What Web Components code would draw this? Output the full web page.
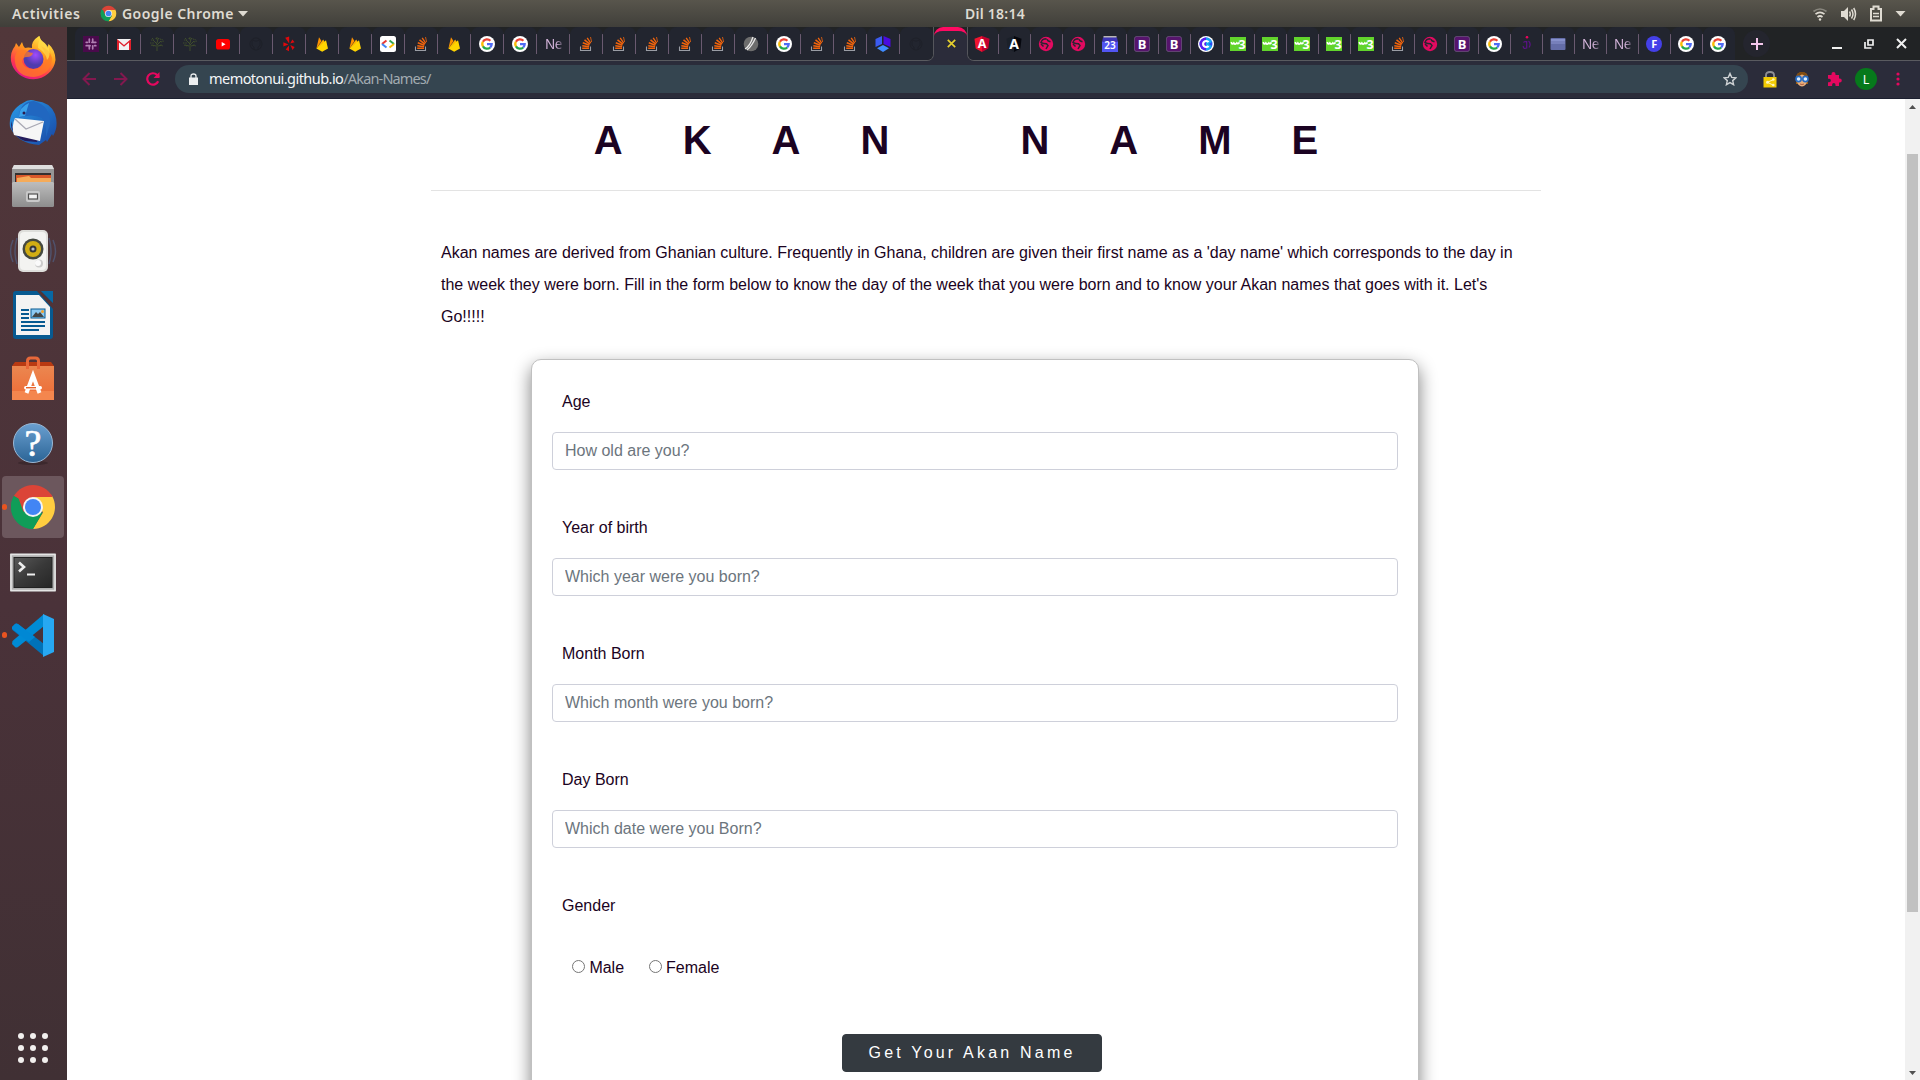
<!DOCTYPE html>
<html lang="en">
<head>
<meta charset="utf-8">
<title>Akan Names</title>
<style>
html,body{margin:0;height:100%;overflow:hidden}
body{font-family:"Liberation Sans",Arial,sans-serif;color:#1b0322}
</style>
</head>
<body>
<desktop-shell>
  <top-panel slot="panel"></top-panel>
  <app-dock slot="dock"></app-dock>
  <browser-window slot="window">
    <tab-strip slot="tabs"></tab-strip>
    <browser-toolbar slot="toolbar"></browser-toolbar>
    <akan-page>
      <form-card>
        <form-field label="Age" hint="How old are you?"></form-field>
        <form-field label="Year of birth" hint="Which year were you born?"></form-field>
        <form-field label="Month Born" hint="Which month were you born?"></form-field>
        <form-field label="Day Born" hint="Which date were you Born?"></form-field>
        <gender-field></gender-field>
        <submit-button>Get Your Akan Name</submit-button>
      </form-card>
    </akan-page>
    <scroll-bar slot="scroll"></scroll-bar>
  </browser-window>
</desktop-shell>

<script>
const UI_FONT = '"Noto Sans","Open Sans",sans-serif';

function define(name, html) {
  const t = document.createElement('template');
  customElements.define(name, class extends HTMLElement {
    constructor() {
      super();
      t.innerHTML = typeof html === 'function' ? html(this) : html;
      this.attachShadow({mode: 'open'}).appendChild(t.content.cloneNode(true));
    }
  });
}

/* ---------- 16px favicons ---------- */
const FAV = {
  slack: '<rect width="16" height="16" fill="#4a0a4c"/><g stroke="#b07fb2" stroke-width="1.700" stroke-linecap="round"><path d="M6.300 3.200v3M9.700 3.200v3M6.300 9.800v3M9.700 9.800v3M3.200 6.300h1.200M11.600 6.300h1.200M3.200 9.700h1.200M11.600 9.700h1.200M8.900 6.300h2M5.100 9.700h2"/></g>',
  gmail: '<path d="M1 3h14v11H1z" fill="#f2f2f2"/><path d="M1 14V3l7 6 7-6v11h-2V6.400L8 10.800 3 6.400V14z" fill="#e0202b"/>',
  tree: '<g stroke="#3f4d2c" fill="none" stroke-width="1"><path d="M8 15V8L4 4M8 9l4-4M8 7l1-4M7 10L3 9M9 10l4-1"/><path d="M2 4h3M3 2l2 2M8 1v3M6.500 2.500h4M11 3l3 1M12 6l3-1M1 7h4M2 9l3 1M11 9l3 1" stroke-dasharray="1.500 .8"/></g>',
  youtube: '<rect x="1" y="3" width="14" height="10.500" rx="2.600" fill="#f00"/><path d="M6.700 6v4.500l3.800-2.200z" fill="#fff"/>',
  github: '<g fill="none" stroke="#1e2028" stroke-width=".9"><circle cx="8" cy="8" r="6"/><path d="M6 14v-3q-3-1-2-5l1-2 2 1h2l2-1 1 2q1 4-2 5v3"/></g>',
  yelp: '<g fill="#e0080c"><path d="M4.200 1.800l4-1.200v6.800z"/><path d="M2.400 6.300l5 2.200-5 2z"/><path d="M8 9.500v5.700l-3.300-1.600z"/><path d="M9.300 9l4.300 2-2 3z"/><path d="M9.200 7.500l2.200-4 2.200 2.700z"/></g>',
  firebase: '<path d="M2.400 12.500L5 1.200 7.500 5z" fill="#ff9100"/><path d="M2.400 12.500L9.200 3.600l1.600 2.700z" fill="#ffb300"/><path d="M2.400 12.500L12 4.300l2 8.200-5.800 3.300z" fill="#ffd400"/>',
  gdev: '<rect width="16" height="16" rx="2.500" fill="#fff"/><g fill="none" stroke-width="2"><path d="M6.500 4.500L2 8" stroke="#ea3a33"/><path d="M2 8l4.500 3.500" stroke="#4285f4"/><path d="M9.500 4.500L14 8" stroke="#32a853"/><path d="M14 8l-4.500 3.500" stroke="#fbbc05"/></g>',
  so: '<path d="M2.500 10.500v4h10v-4" fill="none" stroke="#9a9da5" stroke-width="1.100"/><g stroke="#f2640c" stroke-width="1.500"><path d="M4.200 12.300h6.800"/><path d="M4.300 9.700l6.800 1"/><path d="M4.800 6.800l6.600 2.500"/><path d="M6.500 3.800l5.400 4.400"/><path d="M9.200 1.800l3.500 5.400" stroke-width="1.300"/><path d="M12.500 1l1.100 5" stroke-width=".8"/></g>',
  google: '<circle cx="8" cy="8" r="8" fill="#fff"/><g fill="none" stroke-width="2.300"><path d="M3.900 5.800A4.700 4.700 0 0 1 11.400 4.700" stroke="#ea4335"/><path d="M4.100 10.600A4.700 4.700 0 0 1 3.900 5.700" stroke="#fbbc05"/><path d="M11.200 11.500A4.700 4.700 0 0 1 4 10.400" stroke="#25a84a"/><path d="M8 8.100h4.700A4.700 4.700 0 0 1 11.200 11.500" stroke="#4f6bf5"/></g>',
  shell: '<circle cx="8" cy="8" r="7.300" fill="#6d6d6d"/><path d="M2 13Q7 10 10 1M4 14Q9 10 12.500 2" stroke="#e8e8e8" stroke-width="1.300" fill="none"/>',
  cube: '<path d="M.5 3L7 0v8L.5 11z" fill="#3b5bf0"/><path d="M8.500 0L15.500 3v8l-7-3z" fill="#4a0be0"/><path d="M8 9l6 3.200L8 16l-6-3.800z" fill="#3f8cff"/>',
  angular: '<path d="M8 0l7.500 2.700-1.200 9.800L8 16z" fill="#c3002f"/><path d="M8 0L.5 2.700l1.200 9.800L8 16z" fill="#f0142f"/><text x="8" y="12.300" text-anchor="middle" font-size="12.500" font-weight="700" fill="#fff">A</text>',
  angularDark: '<path d="M8 0l7.500 2.700-1.200 9.800L8 16z" fill="#05070e"/><path d="M8 0L.5 2.700l1.200 9.800L8 16z" fill="#1b2029"/><text x="8" y="12.800" text-anchor="middle" font-size="14" font-weight="700" fill="#fff">A</text>',
  globe: '<circle cx="8" cy="8" r="7.200" fill="#e20a60"/><path d="M8.500 2.800Q4 2.800 3 6.500q2.500 1.300 5.500 1.300l1.500 1.700-2 3.500M9 3.200q.5 1.800 3.500 2.600M3 8l2.500 2.500" stroke="#282530" stroke-width="1.500" fill="none"/>',
  calendar: '<path d="M1.500 0h13v3h-13z" fill="#b9b6b4"/><path d="M0 5h16v11H0z" fill="#5255f2"/><path d="M1 1.500h14L16 6H0z" fill="#3e35b5"/><text x="8" y="12.800" text-anchor="middle" font-size="10" font-weight="600" fill="#fff">23</text>',
  bootstrap: '<rect x=".4" y=".4" width="15.200" height="15.200" rx="2.500" fill="#56146c" stroke="#6e5480" stroke-width=".8"/><text x="8.200" y="12.500" text-anchor="middle" font-size="13" font-weight="700" fill="#fff">B</text>',
  coder: '<circle cx="8" cy="8" r="8" fill="#fff"/><circle cx="8" cy="8" r="6.500" fill="#2a4cf0"/><path d="M8 1.500a6.500 6.500 0 0 0 0 13" fill="#5a1ff0"/><path d="M8 1.500a6.500 6.500 0 0 1 6 4.500L10.500 8l3.500 2A6.500 6.500 0 0 1 8 14.500z" fill="#18a7f4"/><path d="M10.500 6.200a3 3 0 1 0 0 3.600" stroke="#fff" stroke-width="2.200" fill="none"/>',
  w3: '<rect y="1" width="16" height="14" fill="#62d42c"/><path d="M1.300 6q.6 3.200 2.500 1 1.300 2.200 3 0 1 1.500 2.700-.6" fill="none" stroke="#fff" stroke-width="1.700"/><text x="12.200" y="12.700" text-anchor="middle" font-size="12.500" font-weight="700" fill="#fff">3</text>',
  idot: '<circle cx="9" cy="1.200" r="1.300" fill="#e8055c"/><path d="M8.700 5v7.500M5.500 6.500q2-2 3 0M5.200 10q0 3.500 3.500 2M10.500 5q3 2.500 .5 6.500" fill="none" stroke="#5b1287" stroke-width="1.200"/>',
  folder: '<rect x=".5" y="2" width="15" height="12" rx="1" fill="#646da8"/><path d="M1 5h14V3H1z" fill="#8791cc"/><path d="M1 5h14v3H1z" fill="#7780bb"/>',
  fblue: '<circle cx="8" cy="8" r="8" fill="#4440e8"/><text x="8.300" y="11.900" text-anchor="middle" font-size="11" font-weight="700" fill="#fff">F</text>'
};
const fav = n => `<svg width="16" height="16" viewBox="0 0 16 16">${FAV[n]}</svg>`;

/* ---------- browser logo, shared by panel and dock ---------- */
const chromeLogo = s => `<svg width="${s}" height="${s}" viewBox="0 0 48 48">
<path d="M24 24L4.950 13A22 22 0 0 1 43.050 13z" fill="#db4437"/>
<path d="M24 24L4.950 13A22 22 0 0 0 24 46L33 30z" fill="#0f9d58"/>
<path d="M24 13H43.050A22 22 0 0 1 24 46L34 29.500z" fill="#ffcd40"/>
<path d="M24 14H43.500L42 11H8l6.500 18z" fill="#db4437"/>
<path d="M4.950 13L14.500 29.500 19 33 33.500 29.500 24 46A22 22 0 0 1 4.950 13z" fill="#0f9d58"/>
<circle cx="24" cy="24" r="10" fill="#f4f4f4"/><circle cx="24" cy="24" r="8" fill="#4285f4"/></svg>`;

define('desktop-shell', `<style>
:host{display:grid;width:1920px;height:1080px;grid-template:27px 1053px / 67px 1853px;overflow:hidden}
.p{grid-column:1/3}
</style><div class="p"><slot name="panel"></slot></div><slot name="dock"></slot><slot name="window"></slot>`);

define('top-panel', `<style>
:host{display:grid;grid-template-columns:1fr auto 1fr;align-items:center;height:27px;padding:0 14px 0 12px;box-sizing:border-box;
 background:linear-gradient(#58554c,#403f3a);color:#dfdbd2;font:600 14px/26px ${UI_FONT}}
.l{display:flex;align-items:center}.l svg{display:block}
.a{width:69px;letter-spacing:.6px}.c{margin-left:19px}.n{margin-left:5px;width:112px;white-space:nowrap;letter-spacing:.450px}
.d{margin-left:4px}.t{letter-spacing:.250px;padding-left:58px;margin-right:-14px}
.r{display:flex;justify-content:flex-end;align-items:center;gap:12px}
</style>
<div class="l"><span class="a">Activities</span><span class="c">${chromeLogo(17)}</span><span class="n">Google Chrome</span>
<svg class="d" width="10" height="6"><path d="M0 0h10L5 5.500z" fill="#dfdbd2"/></svg></div>
<div class="t">Dil 18:14</div>
<div class="r">
<svg width="16" height="16" fill="none" stroke="#dfdbd2" stroke-width="1.700"><path d="M1.500 5.500Q8 .5 14.500 5.500" opacity=".4"/><path d="M3.500 8.200Q8 4.600 12.500 8.200M5.500 11Q8 9 10.500 11"/><circle cx="8" cy="13.500" r="1.200" fill="#dfdbd2" stroke="none"/></svg>
<svg width="17" height="16"><path d="M1 5h3l4-4v14L4 11H1z" fill="#dfdbd2"/><path d="M9.500 5.500q1.500 2.500 0 5M11.500 3.500q3 4.500 0 9M13.700 2q3.600 6 0 12" fill="none" stroke="#dfdbd2" stroke-width="1.500"/></svg>
<svg width="14" height="17"><path d="M2 4h2.500V1.500h5V4H12v11.500H2z" fill="none" stroke="#dfdbd2" stroke-width="2"/><path d="M4 8.500h6M4 11.500h6" stroke="#dfdbd2" stroke-width="1.600"/></svg>
<svg width="11" height="6"><path d="M.5 0h10l-5 5.500z" fill="#dfdbd2"/></svg>
</div>`);

/* ---------- dock ---------- */
const DOCK = {
firefox: `<defs><linearGradient id="a" x1=".8" y1="0" x2=".3" y2="1"><stop offset="0" stop-color="#fff44f"/><stop offset=".4" stop-color="#ff9a1c"/><stop offset=".75" stop-color="#ff3850"/><stop offset="1" stop-color="#e0128c"/></linearGradient><radialGradient id="b" cx=".6" cy=".3"><stop offset="0" stop-color="#a04bff"/><stop offset="1" stop-color="#4f3cae"/></radialGradient></defs>
<path d="M30.500 1q1 5 5 7 2 2 3 5l1-4q7 6 7 16A22.500 22 0 0 1 2 26q-1-9 4-15l1-3 3 4 3-5q1 4 3 6 3-1 7 0-1-7 7-12z" fill="url(#a)"/><circle cx="24.500" cy="24" r="10" fill="url(#b)"/><path d="M8 17q5-4 10-1 3 2 6 2-1 4-6 4-5 0-5 5 3 7 11 7 9 0 12-8 2-7-4-15 9 4 11 12-1 17-18 19Q8 42 6 27q-1-6 2-10z" fill="#ff7b24" opacity=".75"/><path d="M29 13q8 5 9 12 4-4 2-12 4 5 4 11 0-10-13-20-2 3-2 9z" fill="#ffe04a" opacity=".7"/>`,
thunderbird: `<defs><linearGradient id="a" x1="0" y1="0" x2="1" y2="1"><stop offset="0" stop-color="#2b9ce8"/><stop offset="1" stop-color="#1746a4"/></linearGradient></defs>
<path d="M14 4q6-5 13-2 14 1 19 13 4 12-2 22l-1-2-5 8-1-2-7 5Q8 44 1 28-1 12 14 4z" fill="url(#a)"/><path d="M2 22q-1 14 14 20l12 1 2-6L4 30z" fill="#241c5c"/><path d="M6 19L35 22 31 42 5 36Q2 28 6 19z" fill="#f6f6f6"/><path d="M6 20l11 10 17-7" fill="none" stroke="#a9a9b4" stroke-width="1.300"/><path d="M10 15Q13 2 25 2 42 7 41 25l-4 13Q38 25 33 19 22 14 10 19z" fill="#2167c0"/><path d="M10 18q0-10 10-14L16 17z" fill="#3aa1ea"/><circle cx="15" cy="14" r="1.500" fill="#2a1c50"/>`,
files: `<defs><linearGradient id="a" x2="0" y2="1"><stop offset="0" stop-color="#bdbdbd"/><stop offset="1" stop-color="#8d8d8d"/></linearGradient></defs>
<path d="M5 2h38l2 4v36H3V6z" fill="#969696"/><path d="M5 2h38l2 4H3z" fill="#dedede"/><path d="M6 10h36v10H6z" fill="#353030"/><path d="M7 12h35v8H7z" fill="#d9582a"/><path d="M8 15l12-2 2 2h20v5H8z" fill="#f5ab59"/><rect x="3" y="19" width="42" height="25" rx="1.500" fill="url(#a)"/><rect x="17" y="28" width="14" height="11" rx="2" fill="#c9c9c9"/><rect x="19.500" y="31" width="9" height="5" fill="#f2f2f2" stroke="#515151" stroke-width="1.200"/>`,
music: `<g fill="none" stroke="#5275a9" stroke-width="1.500"><path d="M8 11q-4 13 0 26M4 13q-5 11 0 22M40 11q4 13 0 26M44 13q5 11 0 22" opacity=".45"/></g><rect x="9" y="3" width="30" height="42" rx="5" fill="#dededb"/><rect x="11" y="5" width="26" height="38" rx="4" fill="#f3f3f1"/><circle cx="24" cy="22" r="10.500" fill="#454940"/><circle cx="24" cy="22" r="8" fill="#d1ad14"/><circle cx="24" cy="22" r="3.500" fill="#353538"/><circle cx="24" cy="22" r="1.600" fill="#b5bfcd"/><ellipse cx="30" cy="36.500" rx="4" ry="4" fill="#ccc"/><ellipse cx="29" cy="36" rx="3" ry="3" fill="#fafafa"/>`,
writer: `<rect x="4" y="0" width="40" height="48" rx="3" fill="#075a91"/><path d="M31 0h13v14z" fill="#05507f"/><path d="M7 4h23l11 12v28H7z" fill="#f3f3f3"/><path d="M28 0h4l12 12v6z" fill="#513337"/><path d="M32 0h12v12z" fill="#0868a3"/><path d="M12 19h8M12 23h8M12 27h8M12 31h24M12 35h24M12 39h18" stroke="#075a91" stroke-width="2"/><rect x="22" y="18" width="14" height="9" fill="#8cc9f2" stroke="#075a91"/><path d="M23 26l4-5 2 2 2-2 4 5z" fill="#424646"/><circle cx="33.500" cy="20.500" r="1.500" fill="#f4a32a"/>`,
software: `<defs><linearGradient id="a" x2="0" y2="1"><stop offset="0" stop-color="#eb8750"/><stop offset="1" stop-color="#ee6a35"/></linearGradient></defs><path d="M3 11l3-4h36l3 4z" fill="#b93a12"/><path d="M3 11h42v34H3z" fill="url(#a)"/><path d="M18.500 14V6q0-3 3-3h5q3 0 3 3v8" fill="none" stroke="#e8683a" stroke-width="3"/><path d="M3 36h42v9H3z" fill="#f4864e"/><path d="M17.500 38L24 20.500 30.500 38" fill="none" stroke="#fff" stroke-width="4"/><rect x="15" y="31" width="18" height="3.500" rx="1.700" fill="#fff"/><path d="M17 32.700h10" stroke="#e8632c" stroke-width="1.400"/>`,
help: `<defs><linearGradient id="a" x2="0" y2="1"><stop offset="0" stop-color="#6a9fd0"/><stop offset="1" stop-color="#2b6496"/></linearGradient></defs><ellipse cx="24" cy="44" rx="15" ry="2" fill="#000" opacity=".2"/><circle cx="24" cy="24" r="19.500" fill="url(#a)" stroke="#9ab8d5"/><text x="24" y="37" text-anchor="middle" font-family="Liberation Serif,serif" font-size="38" font-weight="400" stroke="#fff" stroke-width=".7" fill="#fff">?</text>`,
terminal: `<defs><linearGradient id="a" x2="1" y2="1"><stop offset="0" stop-color="#585858"/><stop offset=".5" stop-color="#393939"/><stop offset="1" stop-color="#262626"/></linearGradient></defs><g transform="translate(0 1.500)"><rect x="1" y="5" width="46" height="38" rx="1" fill="#b0b0b0"/><rect x="2" y="6" width="44" height="36" fill="none" stroke="#e5e5e5" stroke-width="1.500"/><rect x="5" y="9" width="38" height="30" fill="url(#a)" stroke="#222"/><path d="M10 14l5 4.500-5 4.500" fill="none" stroke="#eee" stroke-width="2.600"/><path d="M18 26h8" stroke="#eee" stroke-width="2"/></g>`,
code: `<path d="M3 16l3-3q1-1 3 0l26 20v12L3.500 19z" fill="#0072b8"/><path d="M3 33l3 3q1 1 3 0l26-21V3L3.500 30z" fill="#008bd5"/><path d="M3 16l3-3q1-1 3 0l17 13-6 5L3 18z" fill="#0088d4"/><path d="M34 3l11 5v33l-11 5z" fill="#27a8f2"/>`
};
const dockItem = (n, c = '') => `<div class="i ${c}">${n === 'chrome' ? chromeLogo(48) : `<icon-art name="${n}"></icon-art>`}</div>`;
customElements.define('icon-art', class extends HTMLElement {
  constructor() {
    super();
    this.attachShadow({mode: 'open'});
  }
  connectedCallback() {
    this.shadowRoot.innerHTML = `<style>:host{display:block;width:48px;height:48px}svg{display:block}</style><svg width="48" height="48" viewBox="0 0 48 48">${DOCK[this.getAttribute('name')]}</svg>`;
  }
});
define('app-dock', `<style>
:host{display:flex;flex-direction:column;background:linear-gradient(#51373a,#4a3239 55%,#403034);width:67px;height:1053px}
.i{width:62px;height:62px;margin:1px 2px;border-radius:4px;display:flex;align-items:center;justify-content:center;position:relative}
.on{background:#6c575d}
.run::before{content:"";position:absolute;left:0;top:28px;width:5px;height:6px;border-radius:3px;background:#e95420}
.g{margin:auto 0 0;padding:0 18px 17px;display:grid;grid-template-columns:repeat(3,6px);gap:6px}
.g b{width:6px;height:6px;border-radius:3px;background:#f2f0ee}
svg{display:block}
</style>${['firefox','thunderbird','files','music','writer','software','help'].map(n => dockItem(n)).join('')}${dockItem('chrome','on run')}${dockItem('terminal')}${dockItem('code','run')}<div class="g">${'<b></b>'.repeat(9)}</div>`);

/* ---------- browser ---------- */
define('browser-window', `<style>
:host{display:flex;flex-direction:column;width:1853px;height:1053px;background:#fff;overflow:hidden}
.v{display:flex;flex:1;min-height:0}.m{flex:1;overflow:hidden}
</style><slot name="tabs"></slot><slot name="toolbar"></slot><div class="v"><div class="m"><slot></slot></div><slot name="scroll"></slot></div>`);

const LEFT = 'slack gmail tree tree youtube github yelp firebase firebase gdev so firebase google google Ne so so so so so shell google so so cube github'.split(' ');
const RIGHT = 'angular angularDark globe globe calendar bootstrap bootstrap coder w3 w3 w3 w3 w3 so globe bootstrap google idot folder Ne Ne fblue google google'.split(' ');
const tab = (n, i, arr) => `<div class="t${i === arr.length - 1 ? ' last' : ''}">${n === 'Ne' ? '<span>Ne</span>' : fav(n)}</div>`;
define('tab-strip', `<style>
:host{display:flex;height:34px;background:#212325;font-family:${UI_FONT};box-sizing:border-box}
.s{display:flex;box-sizing:border-box;border-bottom:1px solid #5a5b60}
.pre{width:8px}.L{border-radius:0 0 7px 0;border-right:1px solid #55565c;width:859px}
.R{border-radius:0 0 0 7px;border-left:1px solid #55565c}
.t{box-sizing:border-box;width:33px;height:33px;background:#22252f;border-radius:8px 8px 0 0;display:flex;align-items:center;padding:0 0 0 8px;
 background-image:linear-gradient(#6a5a70,#6a5a70);background-size:1px 20px;background-repeat:no-repeat;background-position:right 7px}
.R .t{width:32px}.R .t:first-child{width:31px;padding-left:6px}.R .t{padding-left:7px}
.last{background-image:none}
.t svg{display:block;flex:none}
.t span{width:18px;font-size:13.500px;letter-spacing:-.6px;line-height:20px;color:#d3b3d9;-webkit-mask:linear-gradient(90deg,#000 60%,rgba(0,0,0,.2))}
.act{width:33px;height:34px;box-sizing:border-box;background:#2b2c3a;border-radius:9px 9px 0 0;border-top:4px solid #ff0a62;display:flex;justify-content:center;padding:8px 0 0 1px}
.bg{background:#2b2c3a;display:flex}
.clip{background:#212325;overflow:hidden}
.e{flex:1;display:flex;align-items:center;box-sizing:border-box;border-bottom:1px solid #5a5b60;padding:0 13px 0 8px}
.plus{width:27px;height:27px;border-radius:50%;background:#24252e;display:flex;align-items:center;justify-content:center}
.w{margin-left:auto;display:flex;gap:22px;align-items:center}
</style>
<div class="s pre"></div><div class="bg"><div class="s L clip">${LEFT.map(tab).join('')}</div></div>
<div class="act"><svg width="9" height="9"><path d="M.8.8l7.400 7.400M8.200.8L.8 8.200" stroke="#e6d02e" stroke-width="1.700"/></svg></div>
<div class="bg"><div class="s R clip">${RIGHT.map(tab).join('')}</div></div>
<div class="e"><div class="plus"><svg width="12" height="12"><path d="M6 0v12M0 6h12" stroke="#f3c6ec" stroke-width="2"/></svg></div>
<div class="w"><svg width="10" height="10"><path d="M0 9h10" stroke="#f0f0f0" stroke-width="2"/></svg>
<svg width="10" height="10" fill="none" stroke="#f0f0f0"><path d="M4 1h5v5H4z" stroke-width="1.700"/><path d="M1 3v6h6.500" stroke-width="1.700"/></svg>
<svg width="11" height="11"><path d="M1 1l9 9M10 1l-9 9" stroke="#f0f0f0" stroke-width="2"/></svg></div></div>`);

define('browser-toolbar', `<style>
:host{display:flex;align-items:center;height:38px;box-sizing:border-box;background:#2b2c3a;border-bottom:1px solid #1c2030;padding:0 17px 1px 15px;font-family:${UI_FONT}}
.n{display:flex;gap:18px;width:78px}.n svg,.x svg{display:block;flex:none}
.a{display:flex;align-items:center;margin-left:15px;width:1573px;height:28px;border-radius:14px;background:#354550;box-sizing:border-box;padding:0 11px 0 14px;font-size:14.500px;line-height:27px;color:#f4f6f7}
.u{margin-left:11px;height:28px;letter-spacing:-.550px;white-space:nowrap}.u i{font-style:normal;color:#a2abb1;letter-spacing:-.850px}
.st{margin-left:auto}
.x{display:flex;align-items:center;margin-left:14px;gap:16px;flex:1}
</style>
<div class="n">
<svg width="14" height="14" fill="none" stroke="#83184f" stroke-width="2"><path d="M14 7H1.500M7.500 1L1.500 7l6 6"/></svg>
<svg width="14" height="14" fill="none" stroke="#83184f" stroke-width="2"><path d="M0 7h12.500M6.500 1l6 6-6 6"/></svg>
<svg width="14" height="14" fill="none" stroke="#e5085f" stroke-width="2.200"><path d="M12.200 9.200A5.700 5.700 0 1 1 11 2.900L13 5"/><path d="M13.500 0v6h-6z" fill="#e5085f" stroke="none"/></svg></div>
<div class="a"><svg width="9" height="12"><path d="M0 4.500h9V12H0z" fill="#eceeef"/><path d="M2 5V3q0-2 2.500-2T7 3v2" fill="none" stroke="#eceeef" stroke-width="1.300"/></svg>
<span class="u">memotonui.github.io<i>/Akan-Names/</i></span>
<svg class="st" width="14" height="14"><path d="M7 1.500l1.700 3.900 4.200.4-3.200 2.800.9 4.100L7 10.600l-3.600 2.100.9-4.100L1.100 5.800l4.200-.4z" fill="none" stroke="#cfd3d5" stroke-width="1.400"/></svg></div>
<div class="x">
<svg width="16" height="17"><path d="M4 7V4q0-3 4-3t4 3v3" fill="none" stroke="#8e8f93" stroke-width="1.800"/><path d="M1.500 6h13v10.500h-13z" fill="#f2cb05"/><path d="M11.500 8.500L5.500 11.300l6 3" fill="none" stroke="#fff5b8"/><circle cx="11.300" cy="8.500" r="1.300" fill="#fff5b8"/><circle cx="5.500" cy="11.300" r="1.500" fill="#fff5b8"/><circle cx="11.300" cy="14" r="1.300" fill="#fff5b8"/></svg>
<svg width="16" height="16"><path d="M2 7q0-6 6-6t6 6v6H2z" fill="#9a5c12"/><ellipse cx="8" cy="9.500" rx="5" ry="6" fill="#e6ae7d"/><path d="M2.500 6q4-1 5.500-3 2 2 5.500 3-1-5-5.500-5T2.500 6z" fill="#804c10"/><g fill="#dceeff" stroke="#286dc4" stroke-width="1.600"><circle cx="4.600" cy="8" r="2.600"/><circle cx="11.400" cy="8" r="2.600"/></g><path d="M6 13q2 1 4 0" stroke="#ad5e42" fill="none"/></svg>
<svg width="16" height="16"><path d="M2 4h3.500V3a2 2 0 0 1 4 0v1H13v3.500h.8a2 2 0 0 1 0 4H13V15H9.500v-1.200a1.700 1.700 0 0 0-3.400 0V15H2v-3.800h1.200a1.700 1.700 0 0 0 0-3.400H2z" fill="#e5085f"/></svg>
<svg width="22" height="22" style="margin-left:-3px"><circle cx="11" cy="11" r="11" fill="#06791b"/><text x="11" y="15.500" text-anchor="middle" font-size="12.500" fill="#fff">L</text></svg>
<svg width="4" height="14" style="margin-left:3px" fill="#e5085f"><circle cx="2" cy="2" r="1.600"/><circle cx="2" cy="7" r="1.600"/><circle cx="2" cy="12" r="1.600"/></svg>
</div>`);

define('scroll-bar', `<style>
:host{display:flex;flex-direction:column;width:15px;height:981px;background:#f1f1f1;align-items:center}
svg{display:block;flex:none}.b{width:11px;height:758px;background:#c1c1c1;margin-top:40px}.d{margin-top:auto}
</style><svg width="15" height="15"><path d="M4 10h7L7.500 6z" fill="#505050"/></svg><div class="b"></div><svg class="d" width="15" height="15"><path d="M4 6h7l-3.500 4z" fill="#505050"/></svg>`);

/* ---------- page ---------- */
define('akan-page', `<style>
:host{display:block;width:1110px;margin:0 auto;font:16px/24px "Liberation Sans",Arial,sans-serif;color:#1b0322}
h1{margin:0;padding-top:17px;font-size:40px;line-height:48px;font-weight:700;letter-spacing:60px;text-align:center;white-space:nowrap;height:74px;box-sizing:content-box}
hr{margin:0;border:0;border-top:1px solid #e3e3e3}
p{margin:0;padding:46px 10px 26px;line-height:32px}
</style><h1>AKAN NAME</h1><hr><p>Akan names are derived from Ghanian culture. Frequently in Ghana, children are given their first name as a 'day name' which corresponds to the day in the week they were born. Fill in the form below to know the day of the week that you were born and to know your Akan names that goes with it. Let's Go!!!!!</p><slot></slot>`);

define('form-card', `<style>
:host{display:flex;flex-direction:column;box-sizing:border-box;width:888px;height:900px;margin-left:100px;padding:20px;border:1px solid #c0c0c0;border-radius:10px;background:#fff;box-shadow:0 7px 18px gray}
</style><slot></slot>`);

customElements.define('form-field', class extends HTMLElement {
  constructor() {
    super();
    this.attachShadow({mode: 'open'});
  }
  connectedCallback() {
    this.shadowRoot.innerHTML = `<style>
:host{display:block;height:126px}
label{display:block;padding:10px;margin-bottom:8px}
input{display:block;box-sizing:border-box;width:100%;height:38px;padding:6px 12px;border:1px solid #ced0da;border-radius:4px;background:#fff;font:inherit;color:#495057}
input::placeholder{color:#6c757d;opacity:1}
</style><label>${this.getAttribute('label')}</label><input placeholder="${this.getAttribute('hint')}">`;
  }
});

define('gender-field', `<style>
:host{display:block;height:150px}
.l{padding:10px}.o{display:flex;padding:28px 20px 0}
label{display:flex;align-items:center;gap:4.400px;margin-right:24.600px}
input{margin:0 0 3px;width:13px;height:13px}
</style><div class="l">Gender</div><div class="o"><label><input type="radio" name="g">Male</label><label><input type="radio" name="g">Female</label></div>`);

define('submit-button', `<style>
:host{display:flex;padding-left:290px}
button{width:260px;height:38px;border:1px solid #343a40;border-radius:4px;background:#343a40;color:#fff;font:16px/24px "Liberation Sans",Arial,sans-serif;letter-spacing:3.200px;padding:0;white-space:nowrap}
</style><button><slot></slot></button>`);
</script>
</body>
</html>
